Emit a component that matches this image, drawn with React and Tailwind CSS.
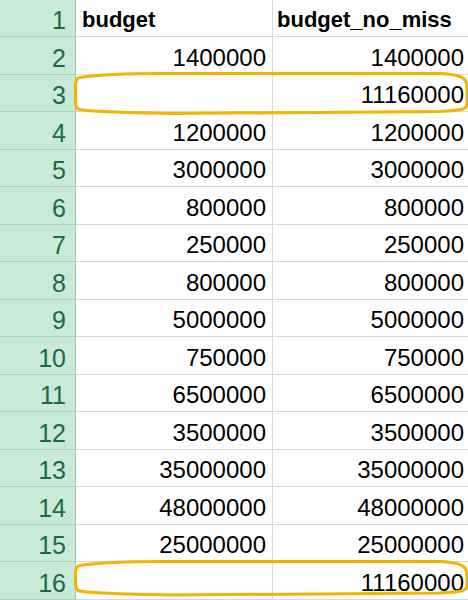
import React from "react";

const rows = [
  ["1400000", "1400000"],
  ["", "11160000"],
  ["1200000", "1200000"],
  ["3000000", "3000000"],
  ["800000", "800000"],
  ["250000", "250000"],
  ["800000", "800000"],
  ["5000000", "5000000"],
  ["750000", "750000"],
  ["6500000", "6500000"],
  ["3500000", "3500000"],
  ["35000000", "35000000"],
  ["48000000", "48000000"],
  ["25000000", "25000000"],
  ["", "11160000"],
];

const Oval = ({ top, bottom }) => (
  <path
    d={`M 80 ${top + 4} C 100 ${top + 1}, 130 ${top}, 160 ${top} L 440 ${top} C 462 ${top + 1}, 467 ${top + 5}, 467 ${top + 13} L 467 ${bottom - 9} C 467 ${bottom - 4}, 460 ${bottom - 3}, 440 ${bottom - 2} L 170 ${bottom} C 120 ${bottom - 1}, 90 ${bottom - 2}, 79 ${bottom - 4} C 76 ${bottom - 5}, 75.5 ${bottom - 8}, 75.5 ${bottom - 14} L 75.5 ${top + 11} C 75.5 ${top + 6}, 77 ${top + 4.5}, 80 ${top + 4} Z`}
    fill="none"
    stroke="#f4b400"
    strokeWidth="3"
    strokeLinejoin="round"
  />
);

export default function App() {
  return (
    <div
      className="relative w-[468px] h-[600px] overflow-hidden bg-white"
      style={{ fontFamily: '"Liberation Sans", Arial, sans-serif' }}
    >
      {/* header row */}
      <div className="flex h-[37px]">
        <div className="w-[76px] shrink-0 bg-[#c8ead7] border-r border-r-[#a3bfae] border-b border-b-[#a9d6bb] flex items-end justify-end pr-[9px] pb-[1px] text-[25px] leading-[29px] text-[#1d6b42]">
          1
        </div>
        <div className="w-[197px] shrink-0 border-r border-b border-[#d9d9d9] flex items-end pl-[6px] pb-[3px] text-[22px] leading-[26px] font-bold text-black">
          budget
        </div>
        <div className="flex-1 border-b border-[#d9d9d9] flex items-end pl-[4px] pb-[3px] text-[22px] leading-[26px] font-bold text-black">
          budget_no_miss
        </div>
      </div>

      {rows.map(([b, c], i) => (
        <div key={i} className="flex h-[37.5px]">
          <div className="w-[76px] shrink-0 bg-[#c8ead7] border-r border-r-[#a3bfae] border-b border-b-[#a9d6bb] flex items-end justify-end pr-[9px] pb-[1px] text-[25px] leading-[29px] text-[#1d6b42]">
            {i + 2}
          </div>
          <div className="w-[197px] shrink-0 border-r border-b border-[#d9d9d9] flex items-end justify-end pr-[6px] pb-[2px] text-[24px] leading-[28px] text-black">
            {b}
          </div>
          <div className="flex-1 border-b border-[#d9d9d9] flex items-end justify-end pr-[4px] pb-[2px] text-[24px] leading-[28px] text-black">
            {c}
          </div>
        </div>
      ))}

      {/* next row, only its top edge shows */}
      <div className="flex h-[37.5px]">
        <div className="w-[76px] shrink-0 bg-[#c8ead7] border-r border-r-[#a3bfae]" />
        <div className="w-[197px] shrink-0 border-r border-[#d9d9d9]" />
        <div className="flex-1" />
      </div>

      <svg className="absolute left-0 top-0 pointer-events-none" width="468" height="600" viewBox="0 0 468 600">
        <Oval top={73.5} bottom={113.5} />
        <Oval top={561.5} bottom={595} />
      </svg>
    </div>
  );
}
